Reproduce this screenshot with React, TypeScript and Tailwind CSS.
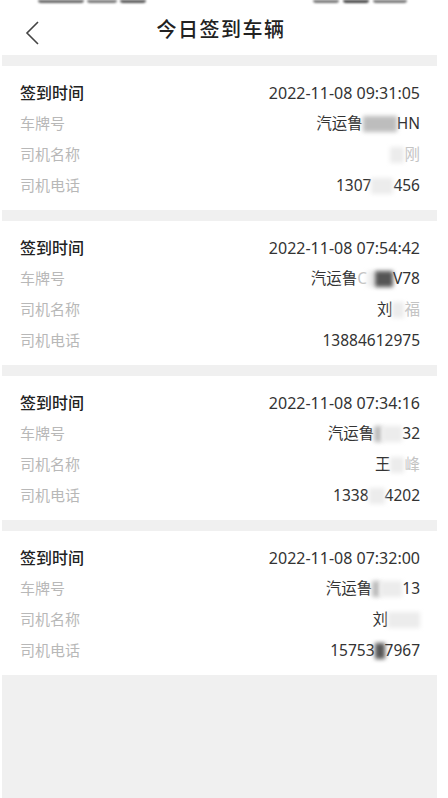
import React from 'react'

type Part = { t: string; blur?: 'light' | 'dark' | 'mid'; w?: number; dim?: boolean }
type Rec = { time: string; plate: Part[]; name: Part[]; phone: Part[] }

const RECORDS: Rec[] = [
  {
    time: '2022-11-08 09:31:05',
    plate: [{ t: '汽运鲁' }, { t: '', blur: 'mid', w: 34 }, { t: 'HN' }],
    name: [{ t: '', blur: 'light', w: 14 }, { t: '刚', dim: true }],
    phone: [{ t: '1307' }, { t: '', blur: 'light', w: 22 }, { t: '456' }],
  },
  {
    time: '2022-11-08 07:54:42',
    plate: [{ t: '汽运鲁' }, { t: 'C', dim: true }, { t: '', blur: 'light', w: 8 }, { t: '', blur: 'dark', w: 18 }, { t: 'V78' }],
    name: [{ t: '刘' }, { t: '', blur: 'light', w: 12 }, { t: '福', dim: true }],
    phone: [{ t: '13884612975' }],
  },
  {
    time: '2022-11-08 07:34:16',
    plate: [{ t: '汽运鲁' }, { t: '', blur: 'mid', w: 8 }, { t: '', blur: 'light', w: 20 }, { t: '32' }],
    name: [{ t: '王' }, { t: '', blur: 'light', w: 14 }, { t: '峰', dim: true }],
    phone: [{ t: '1338' }, { t: '', blur: 'light', w: 16 }, { t: '4202' }],
  },
  {
    time: '2022-11-08 07:32:00',
    plate: [{ t: '汽运鲁' }, { t: '', blur: 'mid', w: 8 }, { t: '', blur: 'light', w: 22 }, { t: '13' }],
    name: [{ t: '刘' }, { t: '', blur: 'light', w: 32 }],
    phone: [{ t: '15753' }, { t: '', blur: 'dark', w: 10 }, { t: '7967' }],
  },
]

function Value({ parts }: { parts: Part[] }) {
  return (
    <span className="flex items-center text-[15.5px] text-[#333]">
      {parts.map((p, i) =>
        p.blur ? (
          <span
            key={i}
            className={`inline-block h-[16px] blur-[2px] ${
              p.blur === 'dark' ? 'bg-[#555]' : p.blur === 'mid' ? 'bg-[#bdbdbd]' : 'bg-[#ececec]'
            }`}
            style={{ width: p.w }}
          />
        ) : (
          <span key={i} className={p.dim ? 'text-[#c4c4c4]' : ''}>{p.t}</span>
        )
      )}
    </span>
  )
}

function Row({ label, first, children }: { label: string; first?: boolean; children: React.ReactNode }) {
  return (
    <div className="flex h-[31px] items-center justify-between">
      <span className={first ? 'text-[16px] font-medium text-[#222]' : 'text-[15px] text-[#b8b8b8]'}>{label}</span>
      {children}
    </div>
  )
}

export default function App() {
  return (
    <div
      className="flex h-[798px] w-[448px] flex-col overflow-hidden bg-white pl-[2px] pr-[11px]"
      style={{ fontFamily: '"Noto Sans", "Noto Sans CJK SC", sans-serif' }}
    >
      {/* status bar, only the bottom edge shows */}
      <div className="flex h-[5px] items-start justify-between pl-[36px] pr-[30px]">
        <div className="flex gap-[3px] blur-[0.8px]">
          <span className="h-[3px] w-[46px] rounded-b bg-[#666]" />
          <span className="h-[3px] w-[30px] rounded-b bg-[#777]" />
          <span className="h-[3px] w-[26px] rounded-b bg-[#555]" />
        </div>
        <div className="flex gap-[4px] blur-[0.8px]">
          <span className="h-[3px] w-[26px] rounded-b bg-[#777]" />
          <span className="h-[3px] w-[26px] rounded-b bg-[#444]" />
          <span className="h-[3px] w-[34px] rounded-b bg-[#777]" />
        </div>
      </div>

      {/* header */}
      <div className="relative flex h-[50px] items-center justify-center">
        <svg className="absolute left-[22px] top-[15px]" width="18" height="26" viewBox="0 0 18 26">
          <polyline points="14,2 3,13 14,24" fill="none" stroke="#444" strokeWidth="1.6" />
        </svg>
        <span className="ml-[3px] text-[20px] font-medium tracking-[1.5px] text-[#222]">今日签到车辆</span>
      </div>

      <div className="flex flex-1 flex-col bg-[#f0f0f0]">
        {RECORDS.map((r, i) => (
          <div key={i} className="mt-[11px] h-[144px] bg-white pl-[18px] pr-[17px] pt-[11px]">
            <Row label="签到时间" first>
              <span className="text-[16px] text-[#333]">{r.time}</span>
            </Row>
            <Row label="车牌号"><Value parts={r.plate} /></Row>
            <Row label="司机名称"><Value parts={r.name} /></Row>
            <Row label="司机电话"><Value parts={r.phone} /></Row>
          </div>
        ))}
      </div>
    </div>
  )
}
